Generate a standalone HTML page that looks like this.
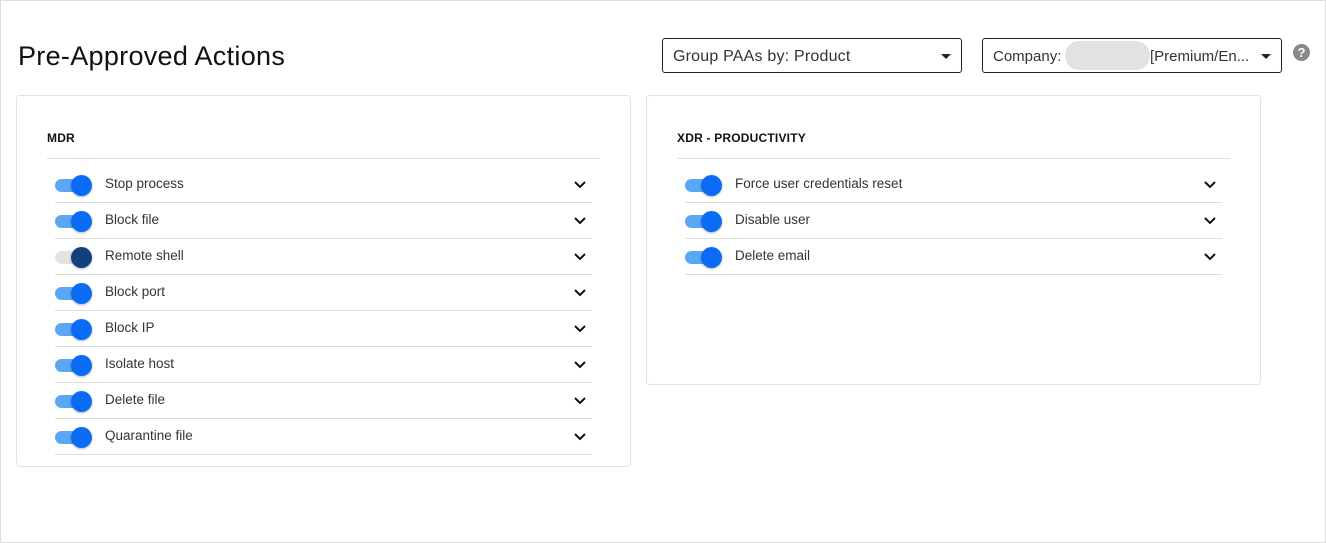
<!DOCTYPE html>
<html><head><style>
*{box-sizing:border-box;margin:0;padding:0}
html,body{width:1326px;height:543px;overflow:hidden;background:#fff;font-family:"Liberation Sans",sans-serif;color:#222}
.page{position:absolute;left:0;top:0;width:1326px;height:543px;border:1px solid #ddd}
h1{position:absolute;left:17px;top:40px;font-size:27px;font-weight:400;color:#111;letter-spacing:0.3px}
.dd{position:absolute;top:37px;height:35px;border:1px solid #222;border-radius:3px;font-size:16px;color:#333;padding:9px 10px;letter-spacing:0.2px}
.dd .ar{position:absolute;right:10px;top:15px;width:0;height:0;border-left:5px solid transparent;border-right:5px solid transparent;border-top:5px solid #222}
.blur{position:absolute;left:82px;top:2px;width:85px;height:29px;background:#e2e2e2;border-radius:14px}
.help{position:absolute;left:1292px;top:43px;width:17px;height:17px;border-radius:50%;background:#888;color:#fff;font-size:13px;font-weight:bold;text-align:center;line-height:17px}
.card{position:absolute;top:94px;border:1px solid #e2e2e2;border-radius:4px}
.title{position:absolute;left:30px;top:35px;font-size:12px;font-weight:bold;color:#111;letter-spacing:0.2px}
.hl{position:absolute;left:30px;right:30px;top:62px;border-top:1px solid #ddd}
.row{position:absolute;left:38px;right:38px;height:36px;border-bottom:1px solid #ddd;font-size:13.5px;color:#333}
.row span{position:absolute;left:50px;top:9px}
.tr{position:absolute;left:0;top:12px;width:34px;height:13px;border-radius:7px;background:#5aa7f5}
.th{position:absolute;left:16px;top:8px;width:21px;height:21px;border-radius:50%;background:#0a6cf5;box-shadow:0 1px 2px rgba(0,0,0,.3)}
.off .tr{background:#e3e3e3}.off .th{background:#123f7e}
.row svg{position:absolute;right:6px;top:14px}
</style></head><body><div class="page">
<h1>Pre-Approved Actions</h1>
<div class="dd" style="left:661px;width:300px">Group PAAs by: Product<div class="ar"></div></div>
<div class="dd" style="left:981px;width:300px;font-size:15px;letter-spacing:0">Company:<div class="blur"></div><span style="position:absolute;left:167px;top:9px">[Premium/En...</span><div class="ar"></div></div>
<div class="help">?</div>

<div class="card" style="left:15px;width:615px;height:372px">
<div class="title">MDR</div><div class="hl"></div>
<div class="row" style="top:71px"><div class="tr"></div><div class="th"></div><span>Stop process</span><svg width="12" height="8"><path d="M1 1l5 5 5-5" fill="none" stroke="#111" stroke-width="2"/></svg></div>
<div class="row" style="top:107px"><div class="tr"></div><div class="th"></div><span>Block file</span><svg width="12" height="8"><path d="M1 1l5 5 5-5" fill="none" stroke="#111" stroke-width="2"/></svg></div>
<div class="row off" style="top:143px"><div class="tr"></div><div class="th"></div><span>Remote shell</span><svg width="12" height="8"><path d="M1 1l5 5 5-5" fill="none" stroke="#111" stroke-width="2"/></svg></div>
<div class="row" style="top:179px"><div class="tr"></div><div class="th"></div><span>Block port</span><svg width="12" height="8"><path d="M1 1l5 5 5-5" fill="none" stroke="#111" stroke-width="2"/></svg></div>
<div class="row" style="top:215px"><div class="tr"></div><div class="th"></div><span>Block IP</span><svg width="12" height="8"><path d="M1 1l5 5 5-5" fill="none" stroke="#111" stroke-width="2"/></svg></div>
<div class="row" style="top:251px"><div class="tr"></div><div class="th"></div><span>Isolate host</span><svg width="12" height="8"><path d="M1 1l5 5 5-5" fill="none" stroke="#111" stroke-width="2"/></svg></div>
<div class="row" style="top:287px"><div class="tr"></div><div class="th"></div><span>Delete file</span><svg width="12" height="8"><path d="M1 1l5 5 5-5" fill="none" stroke="#111" stroke-width="2"/></svg></div>
<div class="row" style="top:323px"><div class="tr"></div><div class="th"></div><span>Quarantine file</span><svg width="12" height="8"><path d="M1 1l5 5 5-5" fill="none" stroke="#111" stroke-width="2"/></svg></div>
</div>

<div class="card" style="left:645px;width:615px;height:290px">
<div class="title">XDR - PRODUCTIVITY</div><div class="hl"></div>
<div class="row" style="top:71px"><div class="tr"></div><div class="th"></div><span>Force user credentials reset</span><svg width="12" height="8"><path d="M1 1l5 5 5-5" fill="none" stroke="#111" stroke-width="2"/></svg></div>
<div class="row" style="top:107px"><div class="tr"></div><div class="th"></div><span>Disable user</span><svg width="12" height="8"><path d="M1 1l5 5 5-5" fill="none" stroke="#111" stroke-width="2"/></svg></div>
<div class="row" style="top:143px"><div class="tr"></div><div class="th"></div><span>Delete email</span><svg width="12" height="8"><path d="M1 1l5 5 5-5" fill="none" stroke="#111" stroke-width="2"/></svg></div>
</div>
</div></body></html>
